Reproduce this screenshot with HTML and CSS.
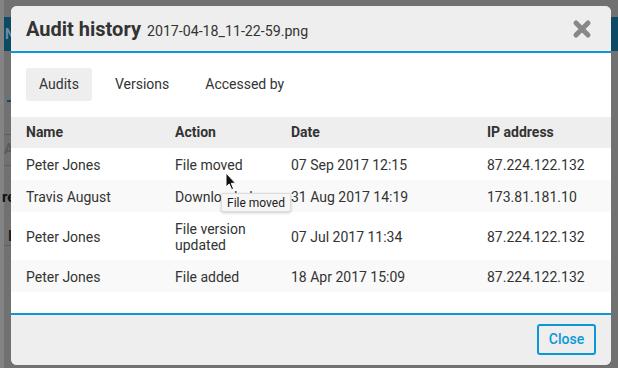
FILE: index.html
```html
<!DOCTYPE html>
<html>
<head>
<meta charset="utf-8">
<link rel="stylesheet" href="styles.css">
</head>
<body>
<div class="backdrop">
  <div class="bg-bar bg-bar-left"><span class="bg-n">N</span></div>
  <div class="bg-bar bg-bar-right"></div>
  <div class="bg-dash bg-dash-blue"></div>
  <div class="bg-line bg-line-1"></div>
  <div class="bg-line bg-line-2"></div>
  <div class="bg-line bg-line-3"></div>
  <span class="bg-txt bg-a">A</span>
  <span class="bg-txt bg-re">re</span>
  <span class="bg-txt bg-i">I</span>
</div>
<div class="modal">
  <div class="modal-header">
    <h1 class="title">Audit history <span class="filename">2017-04-18_11-22-59.png</span></h1>
    <button class="x-btn" aria-label="Close">
      <svg width="20" height="20" viewBox="0 0 20 20"><path d="M4 4 L16 16 M16 4 L4 16" stroke="#888" stroke-width="5" stroke-linecap="round"/></svg>
    </button>
  </div>
  <div class="modal-body">
    <div class="tabs">
      <span class="tab active">Audits</span>
      <span class="tab">Versions</span>
      <span class="tab">Accessed by</span>
    </div>
    <div class="table-wrap">
      <table class="audit">
        <thead>
          <tr><th class="c1">Name</th><th class="c2">Action</th><th class="c3">Date</th><th class="c4">IP address</th></tr>
        </thead>
        <tbody>
          <tr><td>Peter Jones</td><td>File moved</td><td>07 Sep 2017 12:15</td><td>87.224.122.132</td></tr>
          <tr class="alt"><td>Travis August</td><td>Downloaded</td><td>31 Aug 2017 14:19</td><td>173.81.181.10</td></tr>
          <tr><td>Peter Jones</td><td>File version updated</td><td>07 Jul 2017 11:34</td><td>87.224.122.132</td></tr>
          <tr class="alt"><td>Peter Jones</td><td>File added</td><td>18 Apr 2017 15:09</td><td>87.224.122.132</td></tr>
        </tbody>
      </table>
      <div class="tooltip">File moved</div>
      <svg class="cursor" width="12" height="19" viewBox="0 0 12 19"><path d="M1 1 L1 15 L4.2 12 L6.6 17.6 L8.6 16.8 L6.3 11.3 L10.6 11.3 Z" fill="#111" stroke="#fff" stroke-width="1"/></svg>
    </div>
  </div>
  <div class="modal-footer">
    <button class="close-btn">Close</button>
  </div>
</div>
</body>
</html>
```
FILE: styles.css
```css
* { box-sizing: border-box; }
html, body { margin: 0; padding: 0; }
body {
  width: 618px;
  height: 368px;
  overflow: hidden;
  background: linear-gradient(to right, #848484 0 4px, #717171 4px);
  font-family: Roboto, "Liberation Sans", sans-serif;
  color: #333;
  position: relative;
  padding-top: 6px;
}
.backdrop { position: absolute; inset: 0; }
.bg-bar { position: absolute; background: #0d4a66; }
.bg-bar-left { left: 4px; top: 17px; width: 8px; height: 34px; overflow: hidden; }
.bg-n { position: absolute; left: 1px; top: 9px; font-size: 14px; color: #6b8fa3; font-weight: bold; }
.bg-bar-right { left: 611px; top: 17px; width: 7px; height: 34px; }
.bg-dash { position: absolute; height: 2px; }
.bg-dash-blue { left: 7px; top: 100px; width: 4px; background: #0d4a66; }
.bg-line { position: absolute; left: 4px; width: 8px; height: 1px; background: #5e5e5e; }
.bg-line-1 { top: 134px; }
.bg-line-2 { top: 165px; }
.bg-line-3 { top: 245px; }
.bg-txt { position: absolute; font-weight: bold; font-size: 14px; color: #3a3a3a; }
.bg-a { left: 4px; top: 141px; color: #5a5a5a; }
.bg-re { left: 2px; top: 188px; color: #111; font-size: 15px; }
.bg-i { left: 8px; top: 228px; color: #1a1a1a; }

.modal {
  position: relative;
  margin-left: 11px;
  width: 600px;
  height: 359px;
  background: #fff;
  border-radius: 6px;
  overflow: hidden;
  display: flex;
  flex-direction: column;
}
.modal-header {
  height: 47px;
  background: #eee;
  border-bottom: 2px solid #0a98d8;
  display: flex;
  align-items: center;
  justify-content: space-between;
  padding: 0 19px 0 15px;
}
.title {
  margin: 0;
  font-size: 20px;
  font-weight: 700;
  color: #333;
}
.filename { font-size: 14.2px; font-weight: 400; margin-left: 1px; }
.x-btn {
  border: 0; background: none; padding: 0; margin: 0;
  width: 20px; height: 20px; display: block;
}
.x-btn svg { display: block; }

.modal-body {
  flex: 1;
  padding-top: 15px;
}
.tabs {
  display: flex;
  gap: 10px;
  padding: 0 15px;
  margin-bottom: 16px;
}
.tab {
  font-size: 14px;
  line-height: 33px;
  height: 33px;
  padding: 0 13px;
  border-radius: 3px;
  color: #333;
}
.tab.active { background: #eee; }

.table-wrap { position: relative; }
.audit {
  width: 100%;
  border-collapse: collapse;
  font-size: 14px;
  table-layout: fixed;
}
.audit th, .audit td {
  text-align: left;
  vertical-align: middle;
  line-height: 16px;
  padding: 8px 15px;
}
.audit td { padding-top: 9px; padding-bottom: 7px; }
.audit th { font-weight: 700; padding-top: 7px; padding-bottom: 8px; }
.audit thead tr { background: #eee; }
.audit tr.alt { background: #f9f9f9; }
.c1 { width: 149px; }
.c2 { width: 116px; }
.c3 { width: 196px; }
.c4 { width: 139px; }

.tooltip {
  position: absolute;
  left: 210px;
  top: 76px;
  height: 19px;
  padding: 0 5px;
  font-size: 12px;
  line-height: 19px;
  background: #f6f6f6;
  color: #222;
  border: 1px solid #ddd;
  border-radius: 2px;
  box-shadow: 0 1px 3px rgba(0,0,0,0.2);
}
.cursor { position: absolute; left: 214px; top: 55px; }

.modal-footer {
  height: 52px;
  background: #eee;
  border-top: 2px solid #0a98d8;
  display: flex;
  align-items: center;
  justify-content: flex-end;
  padding: 0 15px 2px;
}
.close-btn {
  width: 59px;
  height: 31px;
  border: 2px solid #0a98d8;
  border-radius: 3px;
  background: #fff0;
  color: #0a98d8;
  font-family: Roboto, "Liberation Sans", sans-serif;
  font-size: 14px;
  font-weight: 500;
  padding: 0;
}
```
